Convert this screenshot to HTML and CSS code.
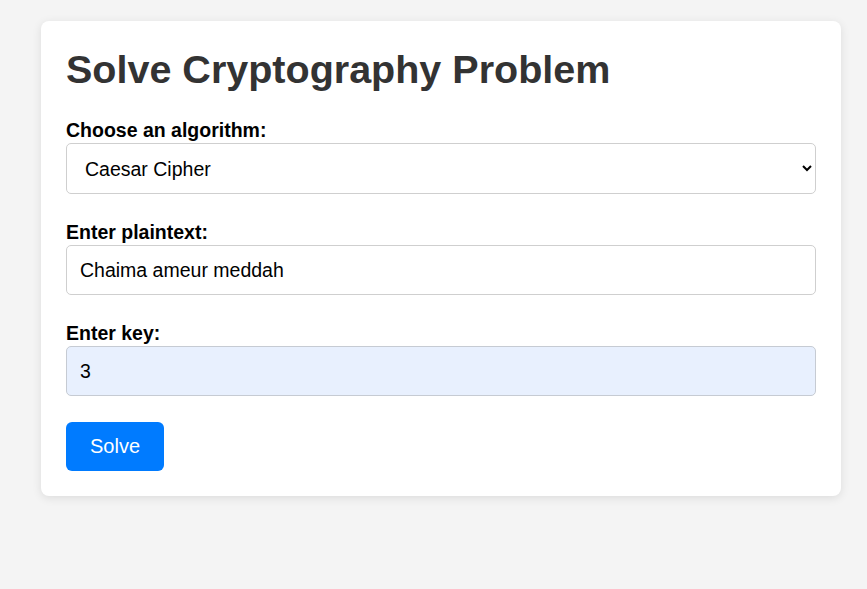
FILE: index.html
```html
<!DOCTYPE html>
<html lang="en">
<head>
<meta charset="utf-8">
<title>Solve Cryptography Problem</title>
<link rel="stylesheet" href="styles.css">
</head>
<body>
<div class="card">
  <h1 class="title">Solve Cryptography Problem</h1>
  <form class="form">
    <label class="label" for="algo">Choose an algorithm:</label>
    <select class="field select" id="algo">
      <option>Caesar Cipher</option>
      <option>Vigenère Cipher</option>
    </select>
    <label class="label" for="plain">Enter plaintext:</label>
    <input class="field" id="plain" type="text" value="Chaima ameur meddah">
    <label class="label" for="key">Enter key:</label>
    <input class="field field-filled" id="key" type="text" value="3">
    <button class="btn" type="button">Solve</button>
  </form>
</div>
</body>
</html>
```
FILE: styles.css
```css
html, body {
  margin: 0;
  background: #f4f4f4;
}
body {
  font-family: "Liberation Sans", Arial, sans-serif;
  padding: 21px 0 0 41px;
  min-height: 589px;
  box-sizing: border-box;
}
.card {
  width: 800px;
  box-sizing: border-box;
  background: #fff;
  padding: 25px;
  border-radius: 8px;
  box-shadow: 0 2px 10px rgba(0, 0, 0, 0.1);
}
.title {
  margin: 0 0 25px;
  font-size: 39.5px;
  line-height: 46px;
  font-weight: bold;
  color: #333;
}
.form {
  display: flex;
  flex-direction: column;
  align-items: flex-start;
}
.label {
  display: block;
  font-size: 19.5px;
  line-height: 23px;
  font-weight: bold;
  color: #000;
  padding-top: 2px;
  margin-bottom: 1px;
}
.field {
  display: block;
  width: 100%;
  box-sizing: border-box;
  font-family: "Liberation Sans", Arial, sans-serif;
  font-size: 19.5px;
  line-height: 23px;
  height: 50px;
  padding: 12px 13px;
  border: 1px solid #cfcfcf;
  border-radius: 5px;
  background: #fff;
  color: #000;
  margin: 0 0 25px;
  outline: none;
}
.select {
  height: 51px;
  padding: 12px 14px;
}
.field-filled {
  background: #e8f0fe;
  border-color: #c6cbd3;
}
.btn {
  font-family: "Liberation Sans", Arial, sans-serif;
  font-size: 20px;
  line-height: 23px;
  color: #fff;
  background: #007bff;
  border: none;
  border-radius: 6px;
  padding: 13px 24px;
  width: 98px;
  height: 49px;
  margin-top: 1px;
  cursor: pointer;
}
```
